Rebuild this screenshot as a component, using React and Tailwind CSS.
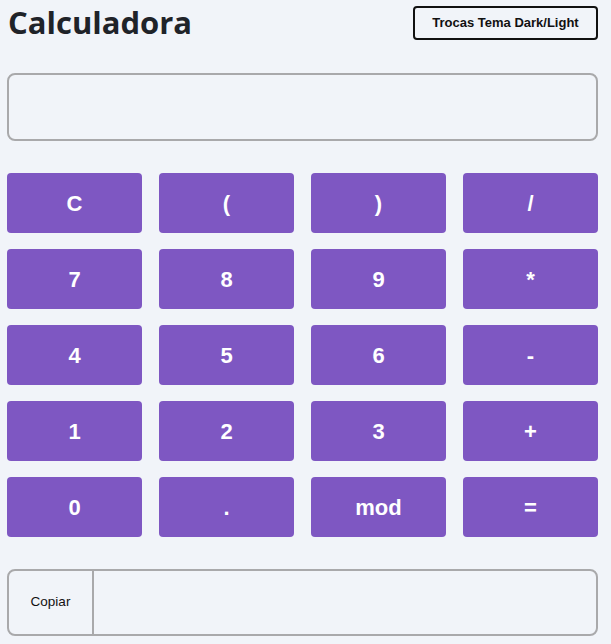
import React, { useState } from 'react';

const keys = ['C', '(', ')', '/', '7', '8', '9', '*', '4', '5', '6', '-', '1', '2', '3', '+', '0', '.', 'mod', '='];

const App = () => {
  const [expr, setExpr] = useState('');
  const [result, setResult] = useState('');

  const press = (k) => {
    if (k === 'C') {
      setExpr('');
      setResult('');
    } else if (k === '=') {
      try {
        setResult(String(Function('return (' + expr.replace(/mod/g, '%') + ')')()));
      } catch (e) {
        setResult('Erro');
      }
    } else {
      setExpr(expr + k);
    }
  };

  return (
    <div className="min-h-[644px] bg-[#f1f4f9] pl-[7px] pt-[1px] font-['Liberation_Sans',Arial,sans-serif]">
      <div className="w-[591px]">
        <div className="flex items-start justify-between">
          <h1 className="mt-[1px] ml-[1px] font-['Open_Sans',sans-serif] text-[31px] font-bold leading-[40px] text-[#1f2329]">
            Calculadora
          </h1>
          <button className="mt-[5px] h-[34px] w-[185px] rounded-[4px] border-2 border-[#111] text-[13px] font-bold text-[#111]">
            Trocas Tema Dark/Light
          </button>
        </div>

        <input
          className="mt-[31px] block h-[68px] w-full rounded-[8px] border-2 border-[#a9a9ab] bg-transparent px-3 text-2xl outline-none"
          value={expr}
          readOnly
        />

        <div className="mt-[32px] grid grid-cols-4 gap-x-[17px] gap-y-[16px]">
          {keys.map((k) => (
            <button
              key={k}
              onClick={() => press(k)}
              className="h-[60px] rounded-[4px] bg-[#7e57c2] text-[22px] font-bold text-white"
            >
              {k}
            </button>
          ))}
        </div>

        <div className="mt-[32px] flex h-[67px] overflow-hidden rounded-[8px] border-2 border-[#a9a9ab]">
          <button className="w-[85px] border-r-2 border-[#a9a9ab] text-[13.5px] text-[#111]">Copiar</button>
          <input className="flex-1 bg-transparent px-3 outline-none" value={result} readOnly />
        </div>
      </div>
    </div>
  );
};

export default App;
